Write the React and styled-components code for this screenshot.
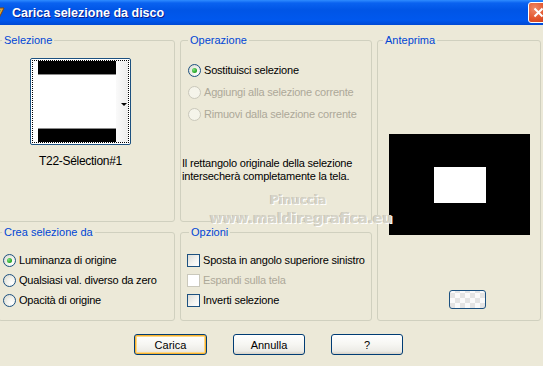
import styled, { createGlobalStyle } from "styled-components";

const GlobalStyle = createGlobalStyle`
  html, body {
    margin: 0;
    padding: 0;
  }
  body {
    background: #ece9d8;
    font-family: "Liberation Sans", Arial, sans-serif;
    font-size: 11px;
    overflow: hidden;
  }
`;

const Window = styled.div`
  position: relative;
  width: 543px;
  height: 366px;
  display: flex;
  flex-direction: column;
  background: #ece9d8;
  overflow: hidden;
`;

const TitleBar = styled.div`
  flex: none;
  height: 25px;
  display: flex;
  align-items: center;
  background: linear-gradient(
    to bottom,
    #2f8cff 0%,
    #0a62f0 12%,
    #0055e6 40%,
    #0058ee 80%,
    #0049d4 100%
  );
`;

const TitleIcon = styled.svg`
  flex: none;
  width: 16px;
  height: 16px;
  margin-left: -10px;
  margin-right: 6px;
`;

const TitleText = styled.span`
  color: #fff;
  font-weight: bold;
  font-size: 12.5px;
  text-shadow: 1px 1px 0 #0a1e8c;
`;

const CloseButton = styled.div`
  flex: none;
  margin-left: auto;
  margin-right: -6px;
  width: 21px;
  height: 21px;
  box-sizing: border-box;
  border: 1px solid #fff;
  border-radius: 3px;
  background: radial-gradient(circle at 30% 30%, #f08a68 0%, #e2552c 55%, #c5371a 100%);
  display: flex;
  align-items: center;
  justify-content: center;
`;

const Body = styled.div`
  padding-top: 9px;
  display: flex;
  flex-direction: column;
`;

const Grid = styled.div`
  margin-left: -2px;
  display: grid;
  grid-template-columns: 177px 192px 164px;
  grid-template-rows: 188px 95px;
  column-gap: 5px;
  row-gap: 4px;
`;

const Group = styled.fieldset`
  margin: 0;
  padding: 0;
  min-width: 0;
  border: 1px solid #d0d0bf;
  border-radius: 3px;
  display: flex;
  flex-direction: column;
  grid-column: ${(p) => p.$col};
  grid-row: ${(p) => p.$row};
`;

const Legend = styled.legend`
  margin-left: ${(p) => p.$indent}px;
  padding: 0 2px;
  line-height: 13px;
  font-size: 11px;
  color: #0046d5;
`;

const ThumbBox = styled.div`
  margin: 11px 0 0 31px;
  width: 101px;
  display: flex;
  flex-direction: column;
  align-items: center;
`;

const Thumb = styled.div`
  width: 101px;
  height: 87px;
  box-sizing: border-box;
  border: 1px solid #1c5180;
  border-radius: 2px;
  padding: 1px;
  background: #fff;
`;

const ThumbInner = styled.div`
  height: 100%;
  box-sizing: border-box;
  border: 1px dotted #000;
  display: flex;
`;

const ThumbImage = styled.div`
  flex: 1;
  padding-left: 5px;
  display: flex;
  flex-direction: column;
  justify-content: space-between;
  background: #fff;
`;

const Bar = styled.div`
  width: 78px;
  height: 13px;
  background: #000;
  border-${(p) => (p.$top ? "bottom" : "top")}: 1px solid #8a8a8a;
`;

const ThumbStrip = styled.div`
  width: 13px;
  background: linear-gradient(to right, #fafafa, #ececec);
  display: flex;
  align-items: center;
  justify-content: flex-end;
  padding-right: 1px;
`;

const Arrow = styled.div`
  width: 0;
  height: 0;
  border-left: 3px solid transparent;
  border-right: 3px solid transparent;
  border-top: 3px solid #000;
  margin-top: 6px;
`;

const ThumbName = styled.div`
  margin-top: 9px;
  font-size: 12px;
  line-height: 14px;
  color: #000;
  white-space: nowrap;
  letter-spacing: -0.3px;
`;

const OptionList = styled.div`
  padding: ${(p) => p.$top}px 0 0 ${(p) => p.$left}px;
  display: flex;
  flex-direction: column;
`;

const OptionRow = styled.label`
  height: ${(p) => p.$h}px;
  display: flex;
  align-items: center;
  gap: 3px;
  color: ${(p) => (p.$disabled ? "#aca899" : "#000")};
  white-space: nowrap;
  letter-spacing: -0.2px;
`;

const RadioCircle = styled.span`
  flex: none;
  width: 13px;
  height: 13px;
  box-sizing: border-box;
  border-radius: 50%;
  border: 1px solid ${(p) => (p.$disabled ? "#cac8bb" : "#1c5180")};
  background: ${(p) =>
    p.$disabled
      ? "#f5f4ea"
      : "radial-gradient(circle at 70% 70%, #ffffff 0%, #f0f0ea 45%, #d4d4cc 100%)"};
  display: flex;
  align-items: center;
  justify-content: center;
`;

const RadioDot = styled.span`
  width: 5px;
  height: 5px;
  border-radius: 50%;
  background: radial-gradient(circle at 35% 35%, #7fe27f, #21a121 70%);
`;

const CheckBox = styled.span`
  flex: none;
  width: 13px;
  height: 13px;
  box-sizing: border-box;
  border: 1px solid ${(p) => (p.$disabled ? "#cac8bb" : "#1c5180")};
  background: ${(p) =>
    p.$disabled ? "#fff" : "linear-gradient(135deg, #dcdcd7 0%, #f5f5f2 60%, #ffffff 100%)"};
`;

const Description = styled.p`
  margin: 32px 0 0 1px;
  line-height: 13px;
  color: #000;
  white-space: nowrap;
  letter-spacing: -0.2px;
`;

const PreviewArea = styled.div`
  padding: 87px 0 0 11px;
  display: flex;
  flex-direction: column;
`;

const PreviewCanvas = styled.div`
  width: 141px;
  height: 101px;
  background: #000;
  padding: 33px 0 0 45px;
  box-sizing: border-box;
`;

const PreviewHole = styled.div`
  width: 52px;
  height: 36px;
  background: #fff;
`;

const SmallButton = styled.div`
  margin: 55px 0 0 60px;
  width: 37px;
  height: 19px;
  box-sizing: border-box;
  border: 1px solid #1c5180;
  border-radius: 3px;
  background-color: #fafafa;
  background-image: linear-gradient(45deg, #e4e4e4 25%, transparent 25%, transparent 75%, #e4e4e4 75%),
    linear-gradient(45deg, #e4e4e4 25%, transparent 25%, transparent 75%, #e4e4e4 75%);
  background-size: 10px 10px;
  background-position: 5px 2px, 10px 7px;
`;

const ButtonRow = styled.div`
  margin-top: 13px;
  padding-left: 134px;
  display: flex;
  gap: 26px;
`;

const Button = styled.button`
  width: ${(p) => p.$w}px;
  height: 21px;
  padding: 0;
  box-sizing: border-box;
  border: 1px solid #003c74;
  border-radius: 3px;
  background: linear-gradient(to bottom, #ffffff 0%, #f6f6f2 50%, #ecebe6 85%, #d6d0c5 100%);
  box-shadow: ${(p) =>
    p.$default ? "inset 0 0 0 1px #f8b330, inset 0 0 0 2px #fdd889" : "none"};
  font-family: "Liberation Sans", Arial, sans-serif;
  font-size: 11px;
  color: #000;
`;

const Watermark = styled.div`
  position: absolute;
  left: ${(p) => p.$x}px;
  top: ${(p) => p.$y}px;
  font-family: "DejaVu Sans", sans-serif;
  font-weight: bold;
  font-size: ${(p) => p.$size}px;
  color: #d6d4c8;
  text-shadow: 1px 1px 0 #ffffff, -1px 0 0 #c4c2b4;
  white-space: nowrap;
  pointer-events: none;
`;

function Radio({ label, checked, disabled, h }) {
  return (
    <OptionRow $h={h} $disabled={disabled}>
      <RadioCircle $disabled={disabled}>{checked && <RadioDot />}</RadioCircle>
      {label}
    </OptionRow>
  );
}

function Check({ label, disabled }) {
  return (
    <OptionRow $h={20} $disabled={disabled}>
      <CheckBox $disabled={disabled} />
      {label}
    </OptionRow>
  );
}

export default function App() {
  return (
    <>
      <GlobalStyle />
      <Window>
        <TitleBar>
          <TitleIcon viewBox="0 0 16 16">
            <path d="M2 3 L14 3 L8 15 Z" fill="#e8a13a" stroke="#7a4a12" strokeWidth="1" />
            <path d="M5 5 L11 5 L8 11 Z" fill="#4db04a" />
            <circle cx="8" cy="6" r="1.5" fill="#d83a2a" />
          </TitleIcon>
          <TitleText>Carica selezione da disco</TitleText>
          <CloseButton>
            <svg width="11" height="11" viewBox="0 0 11 11">
              <path d="M1.5 1.5 L9.5 9.5 M9.5 1.5 L1.5 9.5" stroke="#fff" strokeWidth="2" />
            </svg>
          </CloseButton>
        </TitleBar>

        <Body>
          <Grid>
            <Group $col="1" $row="1">
              <Legend $indent={3}>Selezione</Legend>
              <ThumbBox>
                <Thumb>
                  <ThumbInner>
                    <ThumbImage>
                      <Bar $top />
                      <Bar />
                    </ThumbImage>
                    <ThumbStrip>
                      <Arrow />
                    </ThumbStrip>
                  </ThumbInner>
                </Thumb>
                <ThumbName>T22-Sélection#1</ThumbName>
              </ThumbBox>
            </Group>

            <Group $col="2" $row="1">
              <Legend $indent={7}>Operazione</Legend>
              <OptionList $top={12} $left={7}>
                <Radio h={22} checked label="Sostituisci selezione" />
                <Radio h={22} disabled label="Aggiungi alla selezione corrente" />
                <Radio h={22} disabled label="Rimuovi dalla selezione corrente" />
              </OptionList>
              <Description>
                Il rettangolo originale della selezione
                <br />
                intersecherà completamente la tela.
              </Description>
            </Group>

            <Group $col="3" $row="1 / span 2">
              <Legend $indent={5}>Anteprima</Legend>
              <PreviewArea>
                <PreviewCanvas>
                  <PreviewHole />
                </PreviewCanvas>
                <SmallButton />
              </PreviewArea>
            </Group>

            <Group $col="1" $row="2">
              <Legend $indent={3}>Crea selezione da</Legend>
              <OptionList $top={11} $left={4}>
                <Radio h={20} checked label="Luminanza di origine" />
                <Radio h={20} label="Qualsiasi val. diverso da zero" />
                <Radio h={20} label="Opacità di origine" />
              </OptionList>
            </Group>

            <Group $col="2" $row="2">
              <Legend $indent={8}>Opzioni</Legend>
              <OptionList $top={11} $left={6}>
                <Check label="Sposta in angolo superiore sinistro" />
                <Check disabled label="Espandi sulla tela" />
                <Check label="Inverti selezione" />
              </OptionList>
            </Group>
          </Grid>

          <ButtonRow>
            <Button $w={73} $default>Carica</Button>
            <Button $w={72}>Annulla</Button>
            <Button $w={72}>?</Button>
          </ButtonRow>
        </Body>

        <Watermark $x={270} $y={193} $size={12}>Pinuccia</Watermark>
        <Watermark $x={210} $y={210} $size={14}>www.maldiregrafica.eu</Watermark>
      </Window>
    </>
  );
}
